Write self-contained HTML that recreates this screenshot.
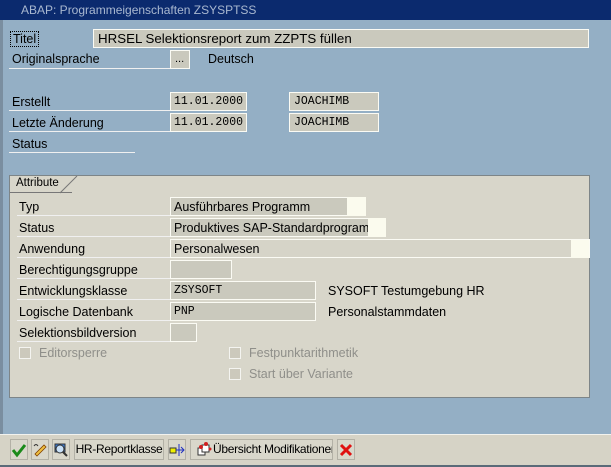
<!DOCTYPE html>
<html><head><meta charset="utf-8"><style>
*{margin:0;padding:0;box-sizing:border-box}
body{width:611px;height:467px;overflow:hidden;background:#94afc5;font-family:"Liberation Sans",sans-serif;font-size:12.5px;color:#000;position:relative}
.a{position:absolute;white-space:nowrap}
.tb{left:0;top:0;width:611px;height:20px;background:#0b2a6e;color:#a9b8d0;font-size:12px;padding:3px 0 0 21px}
.lbl{position:absolute;height:18px;line-height:19px;padding-left:2px;border-bottom:1px solid #f0f0f0;white-space:nowrap}
.fld{position:absolute;height:19px;background:#cac9bd;border:1px solid #fbfbf4;line-height:19px;padding-left:4px;white-space:nowrap;overflow:hidden}
.mono{font-family:"Liberation Mono",monospace;font-size:11.5px;letter-spacing:0;line-height:17px}
.panel{left:9px;top:175px;width:581px;height:223px;background:#d8d6ca;border:1px solid #7d8588}
.chk{position:absolute;width:12px;height:12px;border:1px solid #f4f4f0;background:#ccc9bc}
.gray{color:#8f8f8a}
.bar{left:0;top:434px;width:611px;height:33px;background:#d6d3c6;border-top:1px solid #f2f2ee}
.btn{position:absolute;top:439px;height:21px;border:1px solid #b3b1a6;background:#d9d7cb;line-height:19px;font-size:12px;letter-spacing:-0.3px;text-align:center;white-space:nowrap;overflow:hidden}
</style></head><body>
<div class="a tb">ABAP: Programmeigenschaften ZSYSPTSS</div>
<div class="a" style="left:0;top:20px;width:3px;height:447px;background:#7a8ea0"></div>

<div class="a" style="left:10px;top:31px;width:29px;height:16px;border:1px dotted #000;line-height:15px;padding-left:2px">Titel</div>
<div class="fld" style="left:93px;top:29px;width:496px;font-size:13.3px;line-height:17px">HRSEL Selektionsreport zum ZZPTS füllen</div>

<div class="lbl" style="left:9px;top:51px;width:161px;padding-left:3px;line-height:17px">Originalsprache</div>
<div class="fld" style="left:170px;top:50px;width:20px;padding-left:4px;font-size:11px;line-height:17px">...</div>
<div class="a" style="left:208px;top:52px">Deutsch</div>

<div class="lbl" style="left:9px;top:93px;width:161px;padding-left:3px">Erstellt</div>
<div class="fld mono" style="left:170px;top:92px;width:77px;padding-left:3px">11.01.2000</div>
<div class="fld mono" style="left:289px;top:92px;width:90px">JOACHIMB</div>
<div class="lbl" style="left:9px;top:114px;width:161px;padding-left:3px">Letzte Änderung</div>
<div class="fld mono" style="left:170px;top:113px;width:77px;padding-left:3px">11.01.2000</div>
<div class="fld mono" style="left:289px;top:113px;width:90px">JOACHIMB</div>
<div class="lbl" style="left:9px;top:135px;width:126px;padding-left:3px">Status</div>

<div class="a panel"></div>
<div class="a" style="left:10px;top:176px;width:62px;height:17px;border-bottom:1px solid #777;padding-left:6px;line-height:15px;font-size:11.5px">Attribute</div>
<svg class="a" style="left:60px;top:176px" width="20" height="18"><line x1="0" y1="17" x2="17" y2="0" stroke="#777"/></svg>

<div class="lbl" style="left:17px;top:198px;width:153px">Typ</div>
<div class="fld" style="left:170px;top:197px;width:196px;padding-left:3px">Ausführbares Programm</div>
<div class="a" style="left:347px;top:197px;width:19px;height:19px;background:#fbfbee"></div>
<div class="lbl" style="left:17px;top:219px;width:153px">Status</div>
<div class="fld" style="left:170px;top:218px;width:216px;padding-left:3px">Produktives SAP-Standardprogramm</div>
<div class="a" style="left:368px;top:218px;width:18px;height:19px;background:#fbfbee"></div>
<div class="lbl" style="left:17px;top:240px;width:153px">Anwendung</div>
<div class="fld" style="left:170px;top:239px;width:420px;padding-left:3px;background:#d6d4c8">Personalwesen</div>
<div class="a" style="left:571px;top:240px;width:18px;height:18px;background:#fbfbee"></div>
<div class="lbl" style="left:17px;top:261px;width:153px">Berechtigungsgruppe</div>
<div class="fld" style="left:170px;top:260px;width:62px"></div>
<div class="lbl" style="left:17px;top:282px;width:153px">Entwicklungsklasse</div>
<div class="fld mono" style="left:170px;top:281px;width:146px;padding-left:3px">ZSYSOFT</div>
<div class="a" style="left:328px;top:284px">SYSOFT Testumgebung HR</div>
<div class="lbl" style="left:17px;top:303px;width:153px">Logische Datenbank</div>
<div class="fld mono" style="left:170px;top:302px;width:146px;padding-left:3px">PNP</div>
<div class="a" style="left:328px;top:305px">Personalstammdaten</div>
<div class="lbl" style="left:17px;top:324px;width:153px">Selektionsbildversion</div>
<div class="fld" style="left:170px;top:323px;width:27px"></div>

<div class="chk" style="left:19px;top:347px"></div><div class="a gray" style="left:39px;top:346px">Editorsperre</div>
<div class="chk" style="left:229px;top:347px"></div><div class="a gray" style="left:249px;top:346px">Festpunktarithmetik</div>
<div class="chk" style="left:229px;top:368px"></div><div class="a gray" style="left:249px;top:367px">Start über Variante</div>

<div class="a bar"></div>
<div class="a" style="left:0;top:465px;width:611px;height:2px;background:#5a6a78"></div>
<div class="btn" style="left:10px;width:18px"><svg width="16" height="16" viewBox="0 0 16 16" style="margin-top:2px"><path d="M2 8 L6 13 L14 3" stroke="#1a8a1a" stroke-width="3" fill="none"/></svg></div>
<div class="btn" style="left:31px;width:18px"><svg width="16" height="16" viewBox="0 0 16 16" style="margin-top:2px"><path d="M5 14 L14 5 L12 3 L3 12 Z" fill="#f0c040" stroke="#804000" stroke-width="0.8"/><path d="M2 4 Q4 1 6 4" stroke="#333" fill="none"/></svg></div>
<div class="btn" style="left:52px;width:18px"><svg width="16" height="16" viewBox="0 0 16 16" style="margin-top:2px"><rect x="2" y="2" width="10" height="8" fill="#3a7ad0" stroke="#333"/><circle cx="7" cy="7" r="4" fill="#c8e0f8" stroke="#333"/><path d="M10 10 L14 14" stroke="#333" stroke-width="2"/></svg></div>
<div class="btn" style="left:74px;width:90px">HR-Reportklasse</div>
<div class="btn" style="left:168px;width:18px"><svg width="16" height="16" viewBox="0 0 16 16" style="margin-top:2px"><rect x="1" y="6" width="6" height="5" fill="#f0f000" stroke="#333"/><path d="M7 8 H15 M12 5 L15 8 L12 11 M10 2 V14" stroke="#2030c0" fill="none"/></svg></div>
<div class="btn" style="left:190px;width:143px;text-align:left;padding-left:22px">Übersicht Modifikationen</div>
<svg class="a" style="left:196px;top:441px" width="16" height="16" viewBox="0 0 16 16"><rect x="2" y="7" width="7" height="7" fill="#fff" stroke="#333"/><rect x="6" y="4" width="7" height="7" fill="#fff" stroke="#333"/><circle cx="10" cy="3" r="2" fill="#d02020"/><circle cx="5" cy="6" r="2" fill="#d02020"/><circle cx="14" cy="8" r="1.5" fill="#d02020"/></svg>
<div class="btn" style="left:337px;width:18px"><svg width="16" height="16" viewBox="0 0 16 16" style="margin-top:2px"><path d="M3 3 L13 13 M13 3 L3 13" stroke="#e01010" stroke-width="3"/></svg></div>
</body></html>
